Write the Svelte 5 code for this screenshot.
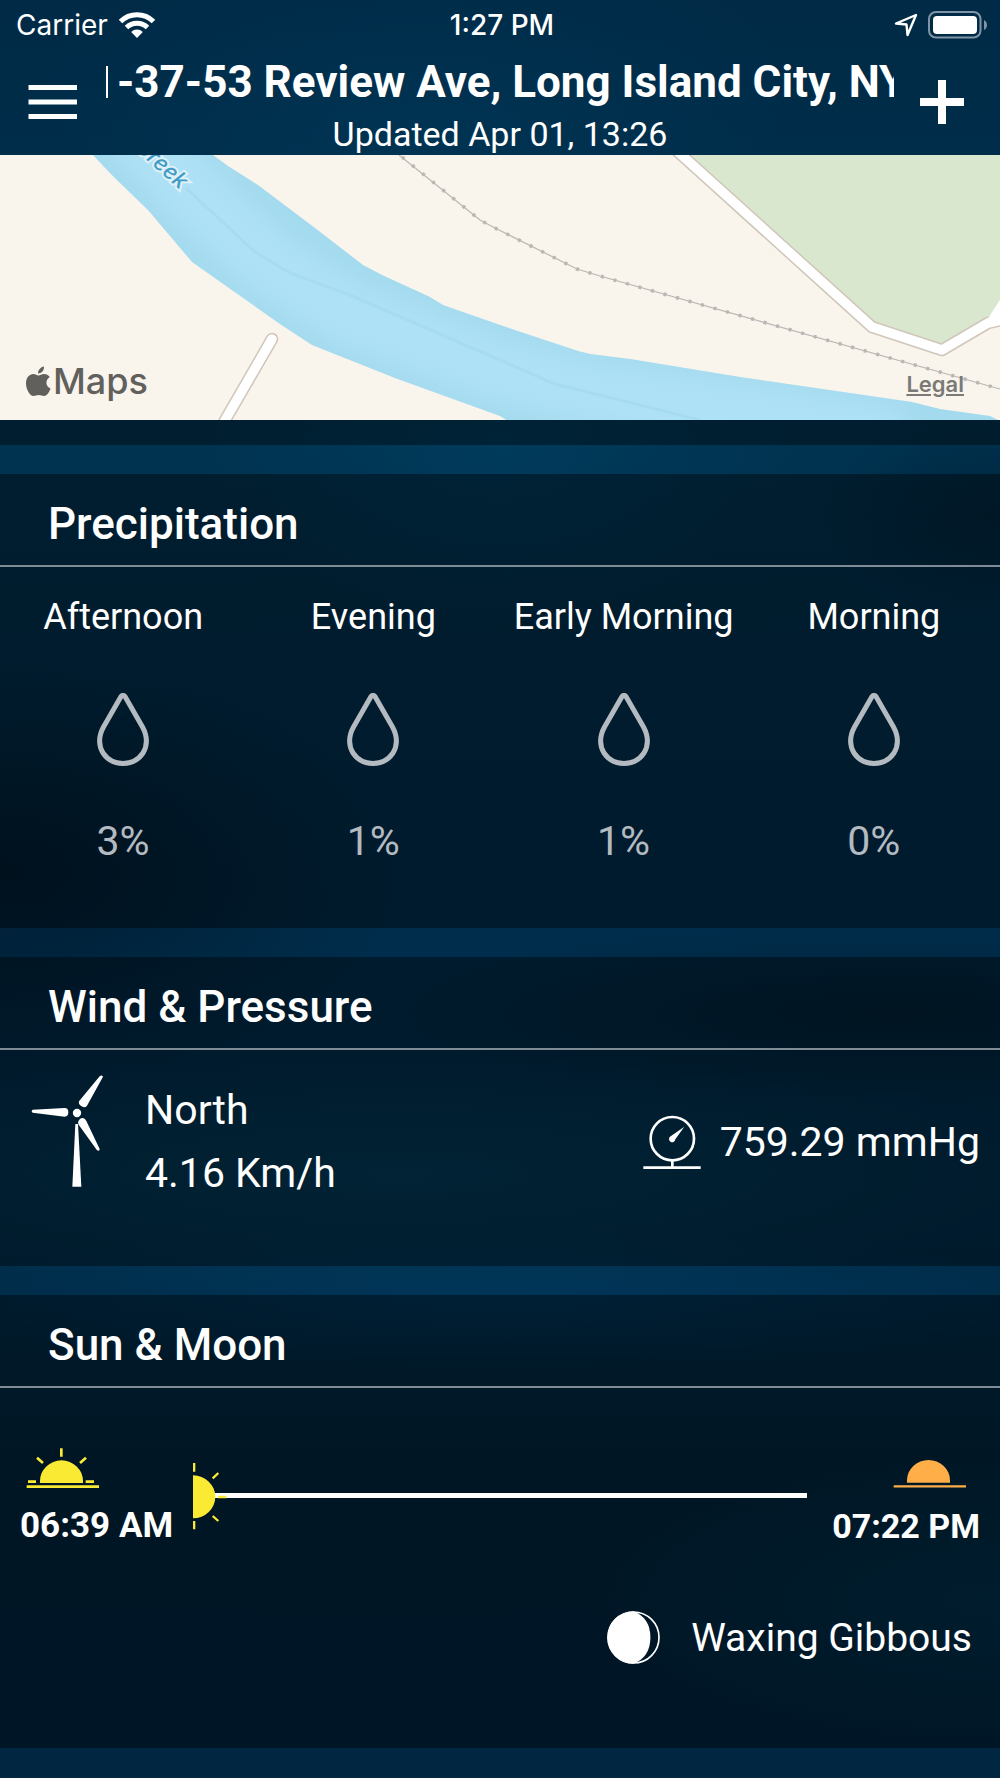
<!--
	Weather details screen: location header, map strip and the
	precipitation / wind / sun cards.
-->
<script lang="ts">
	interface Period {
		label: string;
		chance: number;
	}

	const periods: Period[] = [
		{ label: 'Afternoon', chance: 3 },
		{ label: 'Evening', chance: 1 },
		{ label: 'Early Morning', chance: 1 },
		{ label: 'Morning', chance: 0 }
	];

	const wind = { direction: 'North', speed: '4.16 Km/h' };
	const pressure = '759.29 mmHg';
	const sun = { rise: '06:39 AM', set: '07:22 PM' };
	const moonPhase = 'Waxing Gibbous';
</script>

<div class="screen">
	<header>
		<div class="status">
			<div class="carrier">
				<span>Carrier</span>
				<svg width="38" height="28" viewBox="0 0 38 28" aria-hidden="true">
					<g fill="none" stroke="#fff" stroke-width="5">
						<path d="M2.500 10.500 A23.500 23.500 0 0 1 35.500 10.500" />
						<path d="M8.500 16.500 A15 15 0 0 1 29.500 16.500" />
					</g>
					<path fill="#fff" d="M19 27 L13.200 21 A8.200 8.200 0 0 1 24.800 21 Z" />
				</svg>
			</div>
			<span class="clock">1:27 PM</span>
			<div class="indicators">
				<svg width="24" height="24" viewBox="0 0 24 24" aria-hidden="true">
					<path
						d="M22 2 L2 10.500 L12.500 11.500 L13.500 22 Z"
						fill="none"
						stroke="#fff"
						stroke-width="2.400"
						stroke-linejoin="round"
					/>
				</svg>
				<svg width="60" height="28" viewBox="0 0 60 28" aria-hidden="true">
					<rect x="1" y="1" width="51.500" height="25.500" rx="7" fill="none" stroke="#7f95a5" stroke-width="2" />
					<rect x="5" y="5" width="44" height="18" rx="4" fill="#fff" />
					<path d="M56 9 Q59 10.500 59 14 Q59 17.500 56 19 Z" fill="#7f95a5" />
				</svg>
			</div>
		</div>
		<div class="bar">
			<button type="button" aria-label="Menu">
				<svg width="50" height="36" viewBox="0 0 50 36">
					<path d="M0.500 3.500 H49 M0.500 18 H49 M0.500 32.500 H49" stroke="#fff" stroke-width="5" />
				</svg>
			</button>
			<div class="place">
				<h1><span class="divider"></span>-37-53 Review Ave, Long Island City, NY</h1>
				<p>Updated Apr 01, 13:26</p>
			</div>
			<button type="button" class="add" aria-label="Add location">
				<svg width="44" height="44" viewBox="0 0 44 44">
					<path d="M0 22 H44 M22 0 V44" stroke="#fff" stroke-width="8" />
				</svg>
			</button>
		</div>
	</header>

	<main>
		<section class="map-card" aria-label="Map">
			<div class="map">
				<svg class="tiles" viewBox="0 0 1000 265" preserveAspectRatio="xMidYMid slice" aria-hidden="true">
					<defs>
						<clipPath id="water">
							<path d="M213 0 L228 11 L258 30 L315 73 L363 110 L382 120 L430 142 L443 150 L500 170 L578 196 L590 199 L630 204 L740 222 L912 247 L940 254 L990 261 L1000 266 H508 L500 261 L395 223 L312 190 L280 169 L192 107 L148 55 L120 28 L107 15 L93 0 Z" />
						</clipPath>
						<filter id="soft"><feGaussianBlur stdDeviation="12" /></filter>
					</defs>
					<rect width="1000" height="265" fill="#f9f4ec" />
					<g clip-path="url(#water)">
						<rect width="1000" height="266" fill="#a4daee" />
						<path
							d="M130 -30 L200 45 L270 110 L350 160 L500 217 L600 240 L760 262 L900 285"
							fill="none"
							stroke="#aee1f6"
							stroke-width="64"
							filter="url(#soft)"
						/>
						<path d="M186 33 L255 97 L290 118 L350 140 L500 205 L555 229 L700 265" fill="none" stroke="#a7dcf0" stroke-width="3" />
					</g>
					<path d="M685 0 L872 170 L942 192 L990 164 L1000 146 V0 Z" fill="#dae7cf" />
					<g fill="none" stroke="#b9b7b4">
						<path d="M399 0 L480 65 L495 73 L577 114 L600 121 L1000 234" stroke-width="1.200" />
						<path d="M402 2 L480 65 L495 73 L577 114 L600 121 L1000 234" stroke-width="3.500" stroke-dasharray="3 10" />
					</g>
					<g fill="none" stroke-linejoin="round" stroke-linecap="round">
						<g stroke="#d0c6ba" stroke-width="12.500">
							<path d="M676 -5 L872 172 L942 195 L988 168 L1010 163" />
							<path d="M272 184 L220 274" />
						</g>
						<g stroke="#fff" stroke-width="9.500">
							<path d="M676 -5 L872 172 L942 195 L988 168 L1010 163" />
							<path d="M992 166 L1010 138" />
							<path d="M272 184 L220 274" />
						</g>
					</g>
					<text class="creek" transform="translate(180 35) rotate(42)" text-anchor="end">Creek</text>
				</svg>
				<div class="brand">
					<svg width="25" height="31" viewBox="0 0 25 31" aria-hidden="true">
						<path
							fill="#62605c"
							d="M18 0.500 C18.300 4.500 15.500 7.500 12 7.500 C11.800 4 14.800 1 18 0.500 Z M12.500 9.500 C14 9.500 15.500 8 18 8 C20.200 8 22.500 9 23.800 11 C19 14 19.500 20.500 24.500 22.500 C23.500 25.500 21 30 18 30 C16 30 15 29 12.700 29 C10.500 29 9.500 30 7.500 30 C4 30 0 23.500 0 17.500 C0 11.500 3.500 8 7.300 8 C9.500 8 11 9.500 12.500 9.500 Z"
						/>
					</svg>
					<span>Maps</span>
				</div>
				<a class="legal" href="#legal">Legal</a>
			</div>
		</section>

		<section>
			<h2>Precipitation</h2>
			<ul class="periods">
				{#each periods as period}
					<li>
						<span class="label">{period.label}</span>
						<svg width="52" height="74" viewBox="0 0 52 74" aria-hidden="true">
							<path
								d="M24 3.500 Q26 1.500 28 3.500 L45.500 34 C52 46 49.500 54 46 60 C40.500 68 34 70.500 26 70.500 C18 70.500 11.500 68 6 60 C2.500 54 0 46 6.500 34 Z"
								fill="none"
								stroke="#b3bac0"
								stroke-width="5"
								stroke-linejoin="round"
							/>
						</svg>
						<span class="chance">{period.chance}%</span>
					</li>
				{/each}
			</ul>
		</section>

		<section>
			<h2>Wind &amp; Pressure</h2>
			<div class="air">
				<svg width="75" height="115" viewBox="90 400 225 345" aria-hidden="true">
					<g fill="#fff">
						<circle cx="231" cy="520" r="12.500" />
						<path d="M98 510 L194 505 Q205 505 205 518 Q205 531 194 531 L98 519 Q92 514 98 510 Z" />
						<path d="M299 410 Q305 404 309 411 L261 498 Q255 506 245 500 Q234 494 237 485 Z" />
						<path d="M235 545 Q240 534 249 535 Q256 537 259 544 L299 628 Q299 636 291 632 L236 555 Q233 550 235 545 Z" />
						<path d="M226 553 H234 L244 741 H217 Z" />
					</g>
				</svg>
				<div class="wind">
					<span>{wind.direction}</span>
					<span>{wind.speed}</span>
				</div>
				<div class="pressure">
					<svg width="60" height="58" viewBox="125 160 180 174" aria-hidden="true">
						<g fill="none" stroke="#fff" stroke-width="8">
							<circle cx="216" cy="237" r="65" />
							<path d="M216 301 V324 M129 324 H301" />
						</g>
						<path fill="#fff" d="M252 201 L225 239 A9.500 9.500 0 1 1 211 230 Z" />
					</svg>
					<span>{pressure}</span>
				</div>
			</div>
		</section>

		<section>
			<h2>Sun &amp; Moon</h2>
			<div class="sun">
				<div class="time">
					<svg width="75" height="43" viewBox="75 141 225 129" aria-hidden="true">
						<path fill="#fbea33" d="M120 249 V243 A64.500 62 0 0 1 249 243 V249 Z" />
						<path
							d="M80 260 H297 M84 245 H108 M257 245 H282 M184 145 V170 M111 173 L129 189 M258 173 L240 189"
							stroke="#fbea33"
							stroke-width="8"
						/>
					</svg>
					<strong>{sun.rise}</strong>
				</div>
				<div class="track">
					<svg width="36" height="68" viewBox="577 184 108 204" aria-hidden="true">
						<path fill="#fbea33" d="M580 224 A67 64.500 0 0 1 580 353 Z" />
						<path
							d="M583.500 187 V213 M583.500 361 V386 M639 233 L656 217 M639 346 L656 361 M655 289 H680"
							stroke="#fbea33"
							stroke-width="7"
						/>
					</svg>
				</div>
				<div class="time set">
					<svg width="76" height="32" viewBox="936 115 228 96" aria-hidden="true">
						<path fill="#ffae48" d="M981 189 V182 A64.500 61 0 0 1 1110 182 V189 Z" />
						<path d="M941 200 H1158" stroke="#ffae48" stroke-width="7" />
					</svg>
					<strong>{sun.set}</strong>
				</div>
			</div>
			<div class="moon">
				<svg width="55" height="55" viewBox="80 570 166 166" aria-hidden="true">
					<circle cx="163" cy="653" r="77" fill="none" stroke="#fff" stroke-width="5" />
					<path fill="#fff" d="M163 574 A79 79 0 0 0 163 732 Q214 712 214 653 Q214 594 163 574 Z" />
				</svg>
				<span>{moonPhase}</span>
			</div>
		</section>
	</main>
</div>

<style>
	:global(body) {
		margin: 0;
		background: #002842;
	}
	.screen {
		min-height: 100vh;
		box-sizing: border-box;
		padding-bottom: 29px;
		color: #fff;
		font-family: Roboto, sans-serif;
		background:
			radial-gradient(ellipse 30% 10% at 50% 25%, rgba(0, 66, 104, 0.5), transparent),
			radial-gradient(ellipse 40% 12% at 42% 8%, rgba(0, 62, 98, 0.4), transparent),
			radial-gradient(ellipse 40% 12% at 0% 49%, rgba(0, 18, 34, 0.6), transparent),
			radial-gradient(ellipse 18% 6% at 100% 29%, rgba(0, 30, 52, 0.6), transparent),
			radial-gradient(ellipse 50% 5% at 90% 57%, rgba(0, 26, 44, 0.6), transparent),
			radial-gradient(ellipse 70% 7% at 40% 66%, rgba(4, 68, 98, 0.6), transparent),
			radial-gradient(ellipse 60% 4% at 50% 73%, rgba(0, 56, 94, 0.8), transparent),
			radial-gradient(ellipse 40% 8% at 100% 90%, rgba(0, 60, 90, 0.5), transparent),
			linear-gradient(#002a46, #003350 25%, #002d4b 50%, #002d4a 70%, #00263e 82%, #002641);
	}
	svg {
		display: block;
		flex: none;
	}
	header {
		height: 155px;
	}
	.status {
		display: grid;
		grid-template-columns: 1fr auto 1fr;
		align-items: center;
		height: 50px;
		padding: 0 12px 0 16px;
		font-family: Inter, sans-serif;
		font-size: 28px;
	}
	.carrier,
	.indicators {
		display: flex;
		align-items: center;
		gap: 10px;
	}
	.indicators {
		justify-content: flex-end;
	}
	.clock {
		font-weight: 500;
	}
	.bar {
		display: grid;
		grid-template-columns: 106px 1fr 106px;
		height: 105px;
	}
	button {
		display: flex;
		align-items: center;
		justify-content: center;
		height: 103px;
		padding: 0;
		border: 0;
		background: none;
		cursor: pointer;
	}
	.add {
		width: 96px;
	}
	.place {
		min-width: 0;
		text-align: center;
	}
	h1 {
		display: flex;
		align-items: center;
		gap: 9px;
		margin: 6px 0 0;
		overflow: hidden;
		white-space: nowrap;
		font-size: 44px;
		line-height: 52px;
		font-weight: 700;
	}
	.divider {
		flex: none;
		width: 2px;
		height: 32px;
		background: #fff;
	}
	.place p {
		margin: 6px 0 0;
		font-size: 34px;
		line-height: 40px;
	}
	main {
		display: flex;
		flex-direction: column;
		gap: 29px;
	}
	section {
		background: rgba(0, 0, 0, 0.4);
	}
	.map-card {
		padding-bottom: 25px;
	}
	.map {
		position: relative;
		height: 265px;
	}
	.tiles {
		width: 100%;
		height: 100%;
	}
	.creek {
		font: italic 500 22px Inter, sans-serif;
		fill: #3f9cc6;
		stroke: #def1f8;
		stroke-width: 4px;
		paint-order: stroke;
	}
	.brand {
		position: absolute;
		left: 26px;
		bottom: 15px;
		display: flex;
		align-items: center;
		gap: 2px;
		color: #62605c;
		font: 500 36px/48px Inter, sans-serif;
	}
	.legal {
		position: absolute;
		right: 36px;
		bottom: 22px;
		color: #7c7a76;
		font: 600 22px/28px Inter, sans-serif;
	}
	h2 {
		margin: 0;
		padding: 25px 48px 16px;
		border-bottom: 2px solid #7f8b95;
		font-size: 44px;
		line-height: 50px;
		font-weight: 500;
	}
	.periods {
		display: grid;
		grid-template-columns: repeat(4, 1fr);
		margin: 0 1px 0 -2px;
		padding: 28px 0 62px;
		list-style: none;
	}
	.periods li {
		display: flex;
		flex-direction: column;
		align-items: center;
	}
	.label {
		margin-bottom: 54px;
		font-size: 36px;
		line-height: 44px;
	}
	.chance {
		margin-top: 50px;
		margin-bottom: 1px;
		color: #b3bac0;
		font-size: 41px;
		line-height: 48px;
	}
	.air {
		display: flex;
		align-items: flex-start;
		padding: 23px 20px 61px 30px;
		font-size: 41px;
	}
	.wind {
		display: flex;
		flex-direction: column;
		margin: 6px 0 0 40px;
		line-height: 63px;
	}
	.pressure {
		display: flex;
		align-items: center;
		gap: 18px;
		margin: 40px 0 0 auto;
	}
	.sun {
		display: flex;
		align-items: flex-start;
		padding: 59px 20px 0;
	}
	.time {
		display: flex;
		flex-direction: column;
		align-items: flex-start;
		gap: 15px;
		font-size: 35px;
		line-height: 42px;
	}
	.time svg {
		margin: 0 5px;
	}
	.time.set {
		align-items: flex-end;
		padding-top: 11px;
		font-size: 34px;
	}
	.time.set svg {
		margin: 0 12px;
	}
	.track {
		flex: 1;
		margin: 15px 25px 0 19px;
		background: linear-gradient(#fff, #fff) right 31px / calc(100% - 22px) 5px no-repeat;
	}
	.moon {
		display: flex;
		align-items: center;
		justify-content: flex-end;
		gap: 30px;
		padding: 63px 28px 83px;
		font-size: 39px;
	}
</style>
